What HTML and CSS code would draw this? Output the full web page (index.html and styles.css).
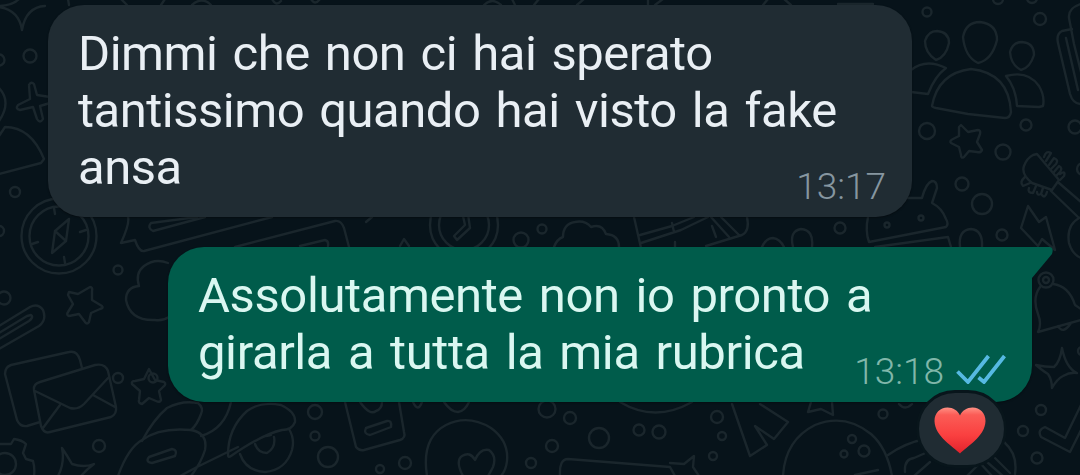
FILE: index.html
```
<!DOCTYPE html>
<html lang="it">
<head>
    <meta charset="UTF-8">
    <meta name="viewport" content="width=device-width, initial-scale=1.0">
    <title>Chat</title>
    <link rel="stylesheet" href="styles.css">
</head>
<body>
    <div class="chat">
        <svg class="wallpaper" viewBox="0 0 1080 475" aria-hidden="true">
            <!-- left side -->
            <path d="M-1 6 Q18 5 22 -6 M45 6 Q26 7 22 30 Q19 10 -1 7"/>
            <circle cx="30" cy="56" r="6.5"/>
            <circle cx="-1" cy="60" r="5.5"/>
            <path d="M29 85 Q31 81 34 84 L37 95 L50 97 M29 85 L30 99 L18 105 Q15 109 20 110 L33 107 L37 119 Q40 124 43 119 L40 106 L50 103"/>
            <path d="M-1 88 Q12 102 -1 121 M-1 136 L5 127 Q31 127 44 159 L41 163 L-1 174"/>
            <circle cx="15" cy="192" r="5"/>
            <circle cx="-1" cy="231" r="5"/>
            <circle cx="59" cy="236" r="37.5"/>
            <circle cx="59" cy="236" r="29.5"/>
            <path d="M69 219 L55 231 L52 253 L66 241 Z M55 231 L66 241 M54 208 L55 214 M86 230 L80 232 M32 244 L38 242 M65 263 L64 257"/>
            <circle cx="4" cy="298" r="6.5"/>
            <circle cx="118" cy="270" r="4.5"/>
            <circle cx="118" cy="378" r="5"/>
            <circle cx="153" cy="378" r="4.5"/>
            <path d="M69 292 L78 294 L90 287 Q93 287 92 291 L92 300 L102 306 Q104 308 100 309 L91 313 L89 322 Q87 325 85 322 L79 314 L69 316 Q66 315 68 312 L73 304 L68 295 Z"/>
            <path d="M149 369 L155 380 L164 382 Q167 384 163 387 L159 391 L161 400 Q160 403 156 401 L149 398 L142 404 Q138 403 139 400 L140 391 L132 384 Q131 381 135 381 L144 379 Z"/>
            <path d="M-1 326 L30 307 Q38 303 43 310 Q47 320 39 326 L-1 349 M-1 339 L29 321 Q34 317 31 315 L27 316 L-1 333"/>
            <path d="M168 263 Q155 258 144 266 Q135 273 139 286 Q126 287 126 300 Q130 321 155 320 Q163 321 169 317"/>
            <path d="M82 368 L80 360 Q77 350 69 352 L11 365 Q5 367 5 374 L17 420 Q20 427 27 426 L40 422"/>
            <path d="M40 382 L95 365 Q105 363 108 371 L116 407 Q117 414 111 417 L50 432 Q44 434 41 426 L34 390 Q33 384 40 382 Z M35 391 L70 408 Q78 410 84 404 L108 378 M60 405 L43 428 M93 395 L115 407"/>
            <circle cx="99" cy="446" r="6"/>
            <circle cx="5" cy="464" r="11"/>
            <path d="M-1 444 L11 444 L14 439 Q22 440 26 444 L23 453 L26 459 L33 461 Q35 468 34 476"/>
            <path d="M58 476 Q65 463 62 448 Q68 457 72 464 Q84 468 94 464 Q86 470 81 476"/>

            <!-- strip between the bubbles -->
            <path d="M128 217 Q130 223 121 243 L135 240 Q139 252 144 251 L272 217"/>
            <path d="M197 217 L151 223 Q147 228 153 231 L205 217 M235 247 L335 221 Q341 220 344 228 L349 247 M300 246 L325 240 Q329 241 328 246"/>
            <path d="M366 222 L372 217 M400 246 L404 239 L409 246"/>
            <circle cx="464" cy="225" r="34"/>
            <circle cx="464" cy="225" r="25"/>
            <path d="M463 216 L465 225 L454 236 L457 240 L470 228 L468 214"/>
            <circle cx="521" cy="240" r="7.5"/>
            <circle cx="542" cy="229" r="4.5"/>
            <path d="M554 247 Q557 239 563 237 Q563 224 575 222 Q585 220 591 227 Q602 223 606 234 Q619 235 619 247"/>
            <path d="M634 217 L641 248 M640 235 L672 226 L694 217 M641 243 L681 230 L708 217 M672 223 L674 232 M675 242 L675 247 M706 246 L742 235 Q750 231 747 217 M711 217 L729 237 M721 217 L739 235 M712 226 L716 237"/>
            <path d="M762 247 Q766 238 773 238 Q780 239 784 247 M793 247 Q789 231 801 229 Q814 230 812 247"/>
            <circle cx="840" cy="228" r="5.5"/>
            <path d="M868 217 Q865 231 869 242 L946 227 Q949 224 946 219 Q942 208 932 203 L937 188 Q937 181 932 181 Q926 183 922 198 L908 198 M875 247 L948 237 L951 247"/>
            <circle cx="887" cy="225" r="2.5"/>
            <circle cx="921" cy="218" r="2.5"/>

            <!-- right side -->
            <circle cx="927" cy="12" r="4.5"/>
            <circle cx="1040" cy="19" r="6"/>
            <circle cx="998" cy="-1" r="5"/>
            <circle cx="1032" cy="-2" r="5"/>
            <path d="M937 31 Q949 32 949 43 Q946 57 936 60 Q925 53 925 41 Q928 31 937 31 Z"/>
            <path d="M980 22 Q997 24 997 40 Q992 60 978 63 Q965 57 963 37 Q966 22 980 22 Z"/>
            <path d="M1022 42 Q1034 43 1034 55 Q1030 68 1021 70 Q1011 65 1010 52 Q1013 42 1022 42 Z"/>
            <path d="M911 70 Q926 58 946 68 Q935 76 928 94 L911 92"/>
            <path d="M932 106 Q938 73 971 69 Q1009 73 1011 112 Q1010 118 1005 118 L968 114 L936 108 Q932 107 932 106 Z"/>
            <path d="M1006 76 Q1028 70 1039 86 Q1045 96 1043 106 L1039 107 L1017 106 Q1016 88 1006 76 Z"/>
            <path d="M1081 4 Q1068 8 1069 18 L1074 44 L1081 72 M1072 29 L1062 31 Q1056 34 1058 43 L1070 94 Q1073 104 1081 104 M1066 38 L1078 90"/>
            <circle cx="927" cy="131" r="8"/>
            <circle cx="1026" cy="125" r="5.5"/>
            <circle cx="1075" cy="127" r="6.5"/>
            <circle cx="1003" cy="152" r="7.5"/>
            <circle cx="962" cy="184" r="6.5"/>
            <circle cx="982" cy="204" r="10"/>
            <circle cx="1002" cy="235" r="5.5"/>
            <circle cx="1083" cy="169" r="6"/>
            <path d="M961 125 L968 132 L978 130 Q981 130 980 134 L977 142 L982 150 Q981 153 977 152 L969 151 L964 157 Q961 159 961 155 L959 147 L951 143 Q949 141 953 139 L959 136 L959 127 Z"/>
            <path d="M960 247 Q958 230 971 229 Q983 230 982 247"/>
            <path d="M1033 155 L1037 154 L1059 180 L1052 190 L1032 183 Q1021 174 1024 166 Q1027 158 1033 155 Z M1059 183 L1081 202 M1051 191 L1078 217 M1081 217 Q1066 224 1069 243 Q1072 254 1081 258"/>
            <path d="M1044 157 Q1046 150 1051 153 L1046 161 M1049 165 L1054 158 Q1059 160 1056 164 L1051 169 M1054 172 L1059 166 Q1063 168 1060 172 L1056 176 M1060 174 Q1066 170 1064 176 L1060 180"/>
            <path d="M1025 177 Q1019 182 1023 186 L1030 183 M1029 188 Q1027 193 1033 193 L1036 186 M1037 192 Q1037 196 1041 194 L1043 188 M1042 195 Q1045 199 1047 192"/>
            <path d="M1028 206 L1039 222 L1046 217 L1055 250 L1042 239 L1038 246 L1021 228 Z"/>
            <circle cx="1046" cy="280" r="7.5"/>
            <circle cx="1046" cy="280" r="3"/>
            <path d="M1053 284 Q1069 286 1075 305 L1081 309 M1040 287 Q1032 298 1038 314 Q1042 324 1038 332 L1081 320 M1058 326 Q1063 335 1071 323"/>
            <path d="M1062 348 Q1060 362 1054 367 Q1045 367 1036 365 Q1043 371 1048 374 Q1052 380 1052 388 Q1057 379 1063 376 Q1070 372 1077 373 Q1066 368 1062 348 Z"/>
            <circle cx="1082" cy="351" r="4"/>
            <circle cx="1041" cy="410" r="5"/>
            <circle cx="1023" cy="431" r="5"/>
            <circle cx="1037" cy="458" r="5.5"/>
            <path d="M1081 405 L1065 438 L1045 427 Q1037 430 1041 437 L1070 452 L1081 430"/>

            <!-- bottom strip -->
            <path d="M142 441 Q153 420 167 408 Q182 400 198 403 Q204 408 201 414 Q197 425 191 430"/>
            <path d="M118 476 Q128 448 142 440 Q160 427 191 430 Q208 433 205 450 Q201 463 191 476 M231 402 Q225 429 201 436 M197 467 L238 447 M180 476 L197 467"/>
            <path d="M149 457 L172 449 Q178 450 175 456 L152 463 Q145 462 149 457 Z"/>
            <path d="M228 455 Q228 428 247 411 Q261 401 281 405 Q296 412 295 422 Q292 430 282 430 Q263 434 231 456 Q228 458 228 455 Z"/>
            <path d="M240 454 Q246 471 265 472 Q286 470 292 450 Q295 439 289 429 M255 444 Q258 453 267 453 Q276 448 274 437 M266 436 Q269 436 271 435"/>
            <circle cx="315" cy="412" r="7"/>
            <circle cx="315" cy="436" r="4.5"/>
            <circle cx="328" cy="457" r="10"/>
            <path d="M345 402 L356 447 Q359 451 364 450 L400 440 Q406 438 404 432 L399 402 M360 402 Q370 416 376 411 Q382 409 382 402 M366 428 L387 421 Q392 420 391 427 L370 435 Q363 434 366 428 Z"/>
            <circle cx="380" cy="469" r="4"/>
            <circle cx="405" cy="463" r="6"/>
            <path d="M413 402 Q418 413 422 402 M444 402 Q451 412 458 412 Q465 411 469 402"/>
            <path d="M427 476 Q421 438 446 425 Q468 414 491 428 Q509 441 507 461 Q506 470 501 476"/>
            <path d="M463 476 Q455 461 462 456 Q470 451 475 460 Q480 448 489 450 Q497 456 493 467 Q490 473 488 476"/>
            <circle cx="531" cy="463" r="5"/>
            <circle cx="547" cy="409" r="8.5"/>
            <circle cx="570" cy="418" r="6"/>
            <circle cx="552" cy="446" r="6"/>
            <circle cx="599" cy="438" r="10"/>
            <circle cx="639" cy="430" r="5.5"/>
            <circle cx="659" cy="432" r="6.5"/>
            <circle cx="717" cy="417" r="6"/>
            <circle cx="713" cy="456" r="4"/>
            <circle cx="722" cy="436" r="4"/>
            <path d="M620 402 Q655 423 692 402"/>
            <path d="M560 476 Q559 459 568 459 L670 467 L675 476 M670 463 L684 464 L694 456 L693 467 L699 476"/>
            <path d="M732 404 L750 456 L767 445 L755 426 L774 439 L788 422 L760 404 M811 402 L808 412 L821 409 L833 415 L832 402 M899 404 Q905 411 912 404"/>
            <circle cx="883" cy="414" r="4.5"/>
            <path d="M783 476 Q785 440 815 425 Q845 413 871 434 Q887 448 892 476"/>
            <circle cx="852" cy="439" r="4"/>
            <circle cx="864" cy="451" r="5.5"/>
            <circle cx="844" cy="454" r="3.5"/>
            <path d="M888 455 Q905 443 925 439 M905 472 Q904 459 914 458 L930 451 M914 476 L930 462 M967 476 L980 463 L992 476 M987 462 L1003 476 M1004 442 Q1018 454 1015 474 M995 458 L1010 473 M855 475 L878 470"/>

            <!-- top strip -->
            <path d="M68 -1 L69 5 M121 -1 L127 5 M161 5 L165 -1 M192 5 Q202 -4 211 5 M272 -1 Q276 7 281 1 M311 -1 Q315 6 320 -1 M484 5 Q492 -3 501 5 M512 -1 L515 5 M534 5 L539 -1 M577 5 L584 -1 M648 5 L648 -1 M655 5 L663 -1 M763 5 L768 -1 M784 -1 L791 5 M838 4 L873 4"/>
        </svg>

        <div class="message received">
            <p class="text">Dimmi che non ci hai sperato<br>tantissimo quando hai visto la fake<br>ansa</p>
            <div class="meta">
                <span class="time">13:17</span>
            </div>
        </div>

        <div class="message sent">
            <p class="text">Assolutamente non io pronto a<br>girarla a tutta la mia rubrica</p>
            <div class="meta">
                <span class="time">13:18</span>
                <svg class="ticks" viewBox="0 0 50 30">
                    <path d="M1.5 17.5 L12 28 L32.5 2 M22.5 23.5 L28 28 L48.5 2"/>
                </svg>
            </div>
            <svg class="tail" viewBox="0 0 24 36">
                <path d="M0 0 H19 Q23 1 21 7 L1 31 Q0 33 0 36 Z"/>
            </svg>
            <div class="reaction">
                <svg class="heart" viewBox="0 0 52 47">
                    <defs>
                        <linearGradient id="heartFill" x1="0" y1="0" x2="0" y2="1">
                            <stop offset="0" stop-color="#ff9185"/>
                            <stop offset="0.16" stop-color="#fb5c56"/>
                            <stop offset="0.6" stop-color="#fa4040"/>
                            <stop offset="1" stop-color="#e2222c"/>
                        </linearGradient>
                    </defs>
                    <path d="M26 46.5 C20 40 1 30 0.5 14 C0.5 6 6 0.5 13.5 0.5 C19 0.5 24 3.5 26 8.5 C28 3.5 33 0.5 38.5 0.5 C46 0.5 51.5 6 51.5 14 C51 30 32 40 26 46.5 Z"/>
                </svg>
            </div>
        </div>
    </div>
</body>
</html>
```
FILE: styles.css
```
* {
    box-sizing: border-box;
    margin: 0;
    padding: 0;
}
body {
    font-family: Roboto, "Liberation Sans", sans-serif;
    background: #07131a;
    overflow: hidden;
}
.chat {
    position: relative;
    display: flex;
    flex-direction: column;
    gap: 30px;
    height: 475px;
    padding: 5px 48px 0;
    overflow: hidden;
}
.wallpaper {
    position: absolute;
    top: 0;
    left: 0;
    width: 1080px;
    height: 475px;
    fill: none;
    stroke: #1a262c;
    stroke-width: 2.4;
    stroke-linecap: round;
    stroke-linejoin: round;
}
.message {
    position: relative;
    display: flex;
    justify-content: space-between;
    width: 864px;
    padding: 20px 26px 0 30px;
    border-radius: 36px;
    box-shadow: 0 1px 2px rgba(0, 0, 0, 0.35);
}
.received {
    align-self: flex-start;
    height: 212px;
    background: #202c33;
    color: #e9eff4;
}
.sent {
    align-self: flex-end;
    height: 155px;
    background: #005c4b;
    color: #daf7f1;
    border-top-right-radius: 0;
}
.text {
    font-size: 49px;
    line-height: 57px;
    white-space: nowrap;
}
.received .text {
    letter-spacing: -0.5px;
    word-spacing: 3.5px;
}
.sent .text {
    letter-spacing: -0.4px;
    word-spacing: 4.1px;
}
.meta {
    display: flex;
    align-items: flex-end;
    align-self: flex-end;
    gap: 12px;
    margin-left: -200px;
    padding-bottom: 9px;
}
.time {
    font-size: 37px;
    font-weight: 350;
    line-height: 43px;
}
.received .time {
    color: #8696a0;
}
.sent .time {
    color: #80b7aa;
}
.ticks {
    width: 50px;
    height: 30px;
    margin-bottom: 9px;
    fill: none;
    stroke: #56b9e2;
    stroke-width: 3.8;
}
.tail {
    position: absolute;
    top: 0;
    left: 863px;
    width: 24px;
    height: 36px;
    fill: #005c4b;
}
.reaction {
    position: absolute;
    right: 25px;
    top: 143px;
    display: flex;
    align-items: center;
    justify-content: center;
    width: 91px;
    height: 78px;
    background: #202c33;
    border: 3px solid #08151b;
    border-radius: 42px;
}
.heart {
    width: 52px;
    height: 47px;
    margin-top: 3px;
    margin-right: 3px;
    fill: url(#heartFill);
}
```
